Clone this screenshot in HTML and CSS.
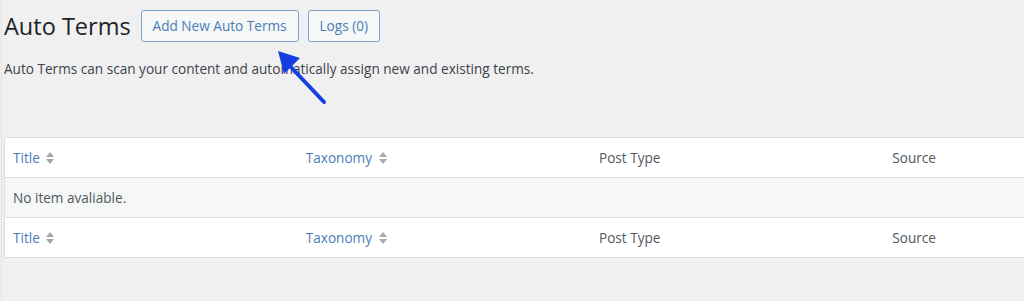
FILE: index.html
```html
<!DOCTYPE html>
<html lang="en">
<head>
    <meta charset="UTF-8">
    <meta name="viewport" content="width=device-width, initial-scale=1.0">
    <title>Auto Terms</title>
    <link rel="stylesheet" href="styles.css">
</head>
<body>

<div class="wrap">
    <div class="page-head">
        <h1>Auto Terms</h1>
        <a class="page-title-action" href="#">Add New Auto Terms</a>
        <a class="page-title-action" href="#">Logs (0)</a>
    </div>

    <p class="description">Auto Terms can scan your content and automatically assign new and existing terms.</p>

    <!-- annotation arrow pointing at the add button -->
    <svg class="arrow" width="60" height="60" viewBox="0 0 60 60">
        <line x1="48" y1="52" x2="13" y2="15" stroke="#1440e0" stroke-width="4" stroke-linecap="round"/>
        <polygon points="2,1 24,8 8,24" fill="#1440e0"/>
    </svg>

    <table class="list-table">
        <thead>
            <tr>
                <th><a href="#">Title <span class="sort"></span></a></th>
                <th><a href="#">Taxonomy <span class="sort"></span></a></th>
                <th>Post Type</th>
                <th>Source</th>
            </tr>
        </thead>
        <tbody>
            <tr class="no-items">
                <td colspan="4">No item avaliable.</td>
            </tr>
        </tbody>
        <tfoot>
            <tr>
                <th><a href="#">Title <span class="sort"></span></a></th>
                <th><a href="#">Taxonomy <span class="sort"></span></a></th>
                <th>Post Type</th>
                <th>Source</th>
            </tr>
        </tfoot>
    </table>
</div>

</body>
</html>
```

FILE: styles.css
```css
/* General Styles */
body {
    margin: 0;
    background-color: #f0f0f1;
    font-family: "Open Sans", "Noto Sans", sans-serif;
    color: #3c434a;
    overflow: hidden;
}

.wrap {
    position: relative;
    padding: 10px 0 0 2px;
    border-left: 1px dotted #d6d6d6;
    min-height: 301px;
    box-sizing: border-box;
    margin-left: 1px;
}

.page-head {
    display: flex;
    align-items: center;
    gap: 9px;
    height: 32px;
}

h1 {
    margin: 0 1px 0 0;
    font-size: 23.5px;
    font-weight: 400;
    color: #1d2327;
    line-height: 32px;
}

.page-title-action {
    display: inline-block;
    height: 30px;
    line-height: 30px;
    padding: 0 11px;
    border: 1px solid #7ea4d3;
    border-radius: 3px;
    background-color: #f6f7f7;
    color: #4a7db8;
    font-size: 13.6px;
    text-decoration: none;
}

.description {
    margin: 17px 0 0 0;
    font-size: 13.6px;
    line-height: 20px;
}

.arrow {
    position: absolute;
    left: 274px;
    top: 50px;
}

.list-table {
    margin-top: 58px;
    width: 1174px;
    border-collapse: collapse;
    background-color: #ffffff;
    border: 1px solid #dcdcde;
    table-layout: fixed;
}

.list-table th,
.list-table td {
    text-align: left;
    font-weight: 400;
    font-size: 13.6px;
    height: 39px;
    padding: 0 8px;
}

.list-table th {
    color: #50575e;
}

.list-table thead th {
    border-bottom: 1px solid #dcdcde;
}

.list-table tfoot th {
    border-top: 1px solid #dcdcde;
}

.list-table a {
    color: #4a7db8;
    text-decoration: none;
}

.no-items td {
    background-color: #f6f7f7;
    color: #50575e;
}

.sort {
    display: inline-block;
    position: relative;
    width: 10px;
    height: 14px;
    margin-left: 2px;
    vertical-align: -2px;
}

.sort::before,
.sort::after {
    content: "";
    position: absolute;
    left: 1px;
    border-left: 4px solid transparent;
    border-right: 4px solid transparent;
}

.sort::before {
    top: 1px;
    border-bottom: 5px solid #a7aaad;
}

.sort::after {
    top: 8px;
    border-top: 5px solid #a7aaad;
}
```
